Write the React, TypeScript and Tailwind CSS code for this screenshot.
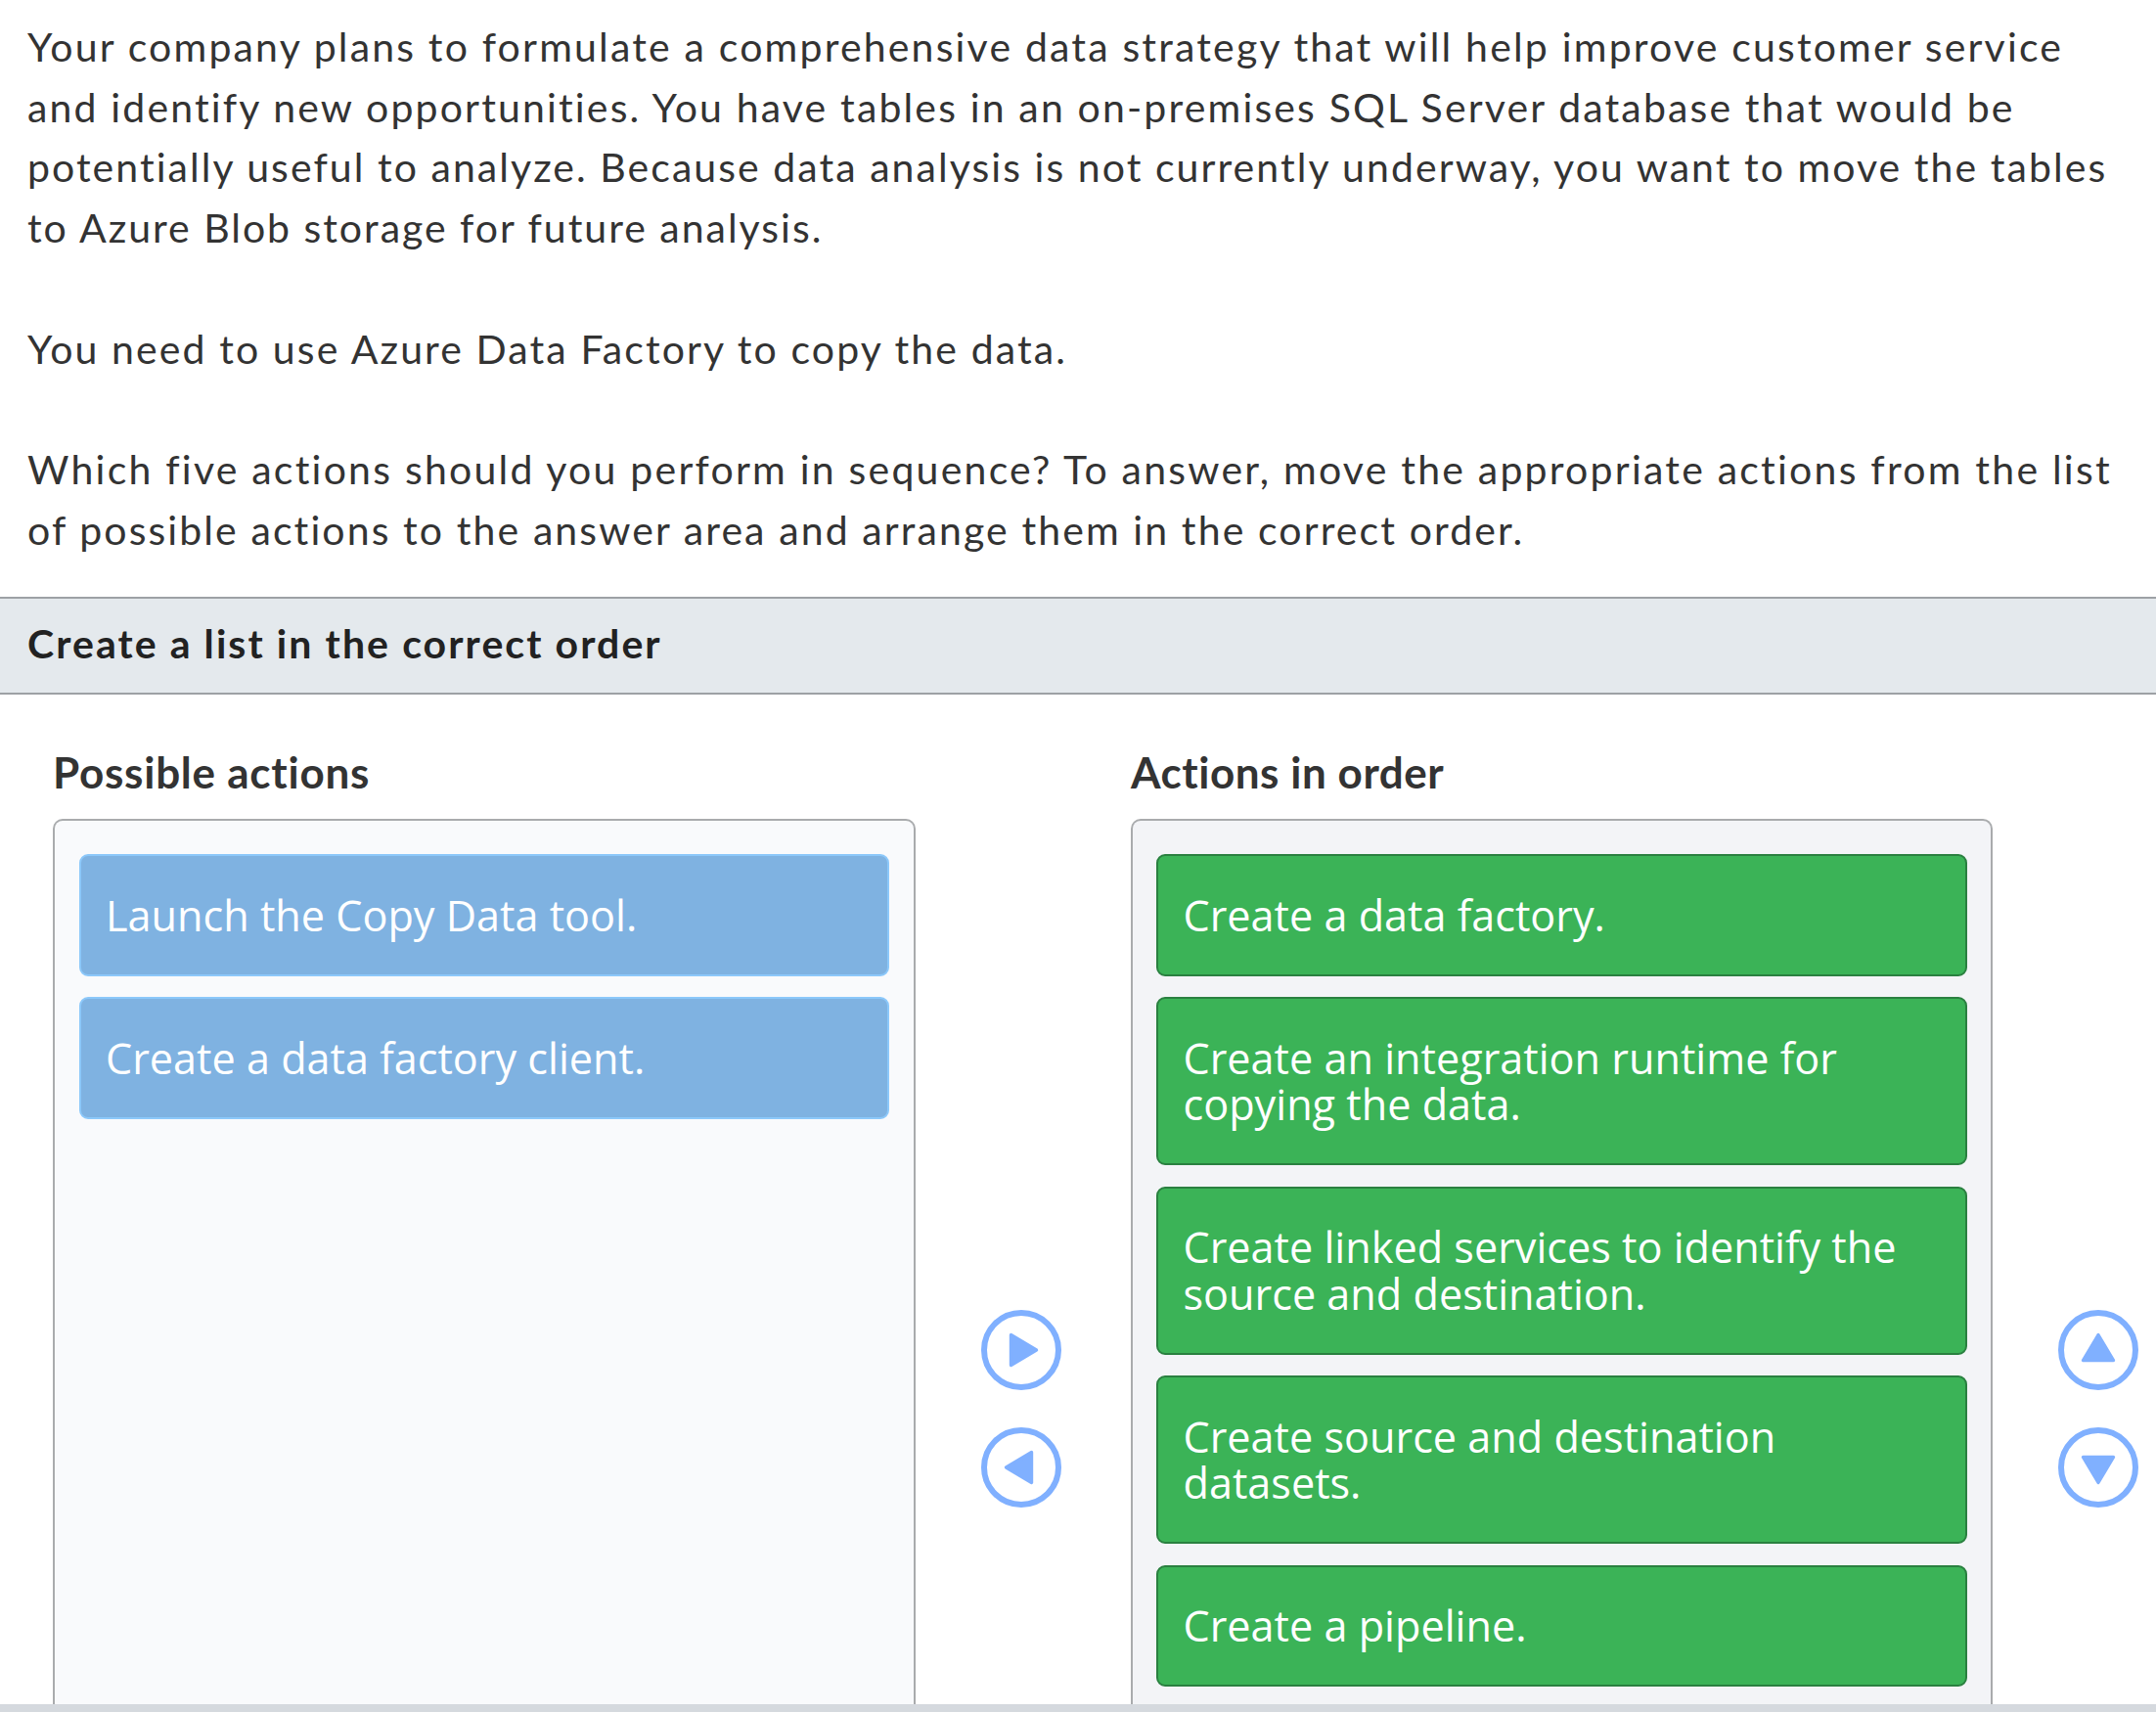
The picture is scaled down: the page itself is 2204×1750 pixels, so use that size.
type Direction = "right" | "left" | "up" | "down";

const rotation: Record<Direction, string> = {
  right: "rotate-0",
  left: "rotate-180",
  up: "-rotate-90",
  down: "rotate-90",
};

function ArrowButton({ direction }: { direction: Direction }) {
  return (
    <button type="button" aria-label={`Move ${direction}`} className="block size-[82px] rounded-full">
      <svg viewBox="0 0 82 82" className={`size-full ${rotation[direction]}`}>
        <circle cx="41" cy="41" r="38" fill="none" stroke="#80b0ff" strokeWidth="6" />
        <path
          d="M30.5 25.5 V56.5 L56.5 41 Z"
          fill="#80b0ff"
          stroke="#80b0ff"
          strokeWidth="3.4"
          strokeLinejoin="round"
        />
      </svg>
    </button>
  );
}

const possible = ["Launch the Copy Data tool.", "Create a data factory client."];

const ordered = [
  ["Create a data factory."],
  ["Create an integration runtime for", "copying the data."],
  ["Create linked services to identify the", "source and destination."],
  ["Create source and destination", "datasets."],
  ["Create a pipeline."],
];

function Line({ className, children }: { className: string; children: string }) {
  return <span className={`block whitespace-nowrap ${className}`}>{children}</span>;
}

export default function App() {
  return (
    <div className="flex h-[1750px] w-[2204px] flex-col overflow-hidden bg-white font-['Lato',sans-serif] text-[#333]">
      <section className="h-[610px] shrink-0 pt-[17px] pl-[28px] text-[41px] leading-[61.7px]">
        <p className="mb-[61.7px]">
          <Line className="tracking-[2.18px]">
            Your company plans to formulate a comprehensive data strategy that will help improve customer service
          </Line>
          <Line className="tracking-[2.15px]">
            and identify new opportunities. You have tables in an on-premises SQL Server database that would be
          </Line>
          <Line className="tracking-[2.05px]">
            potentially useful to analyze. Because data analysis is not currently underway, you want to move the tables
          </Line>
          <Line className="tracking-[1.98px]">to Azure Blob storage for future analysis.</Line>
        </p>
        <p className="mb-[61.7px]">
          <Line className="tracking-[2.1px]">You need to use Azure Data Factory to copy the data.</Line>
        </p>
        <p>
          <Line className="tracking-[2.22px]">
            Which five actions should you perform in sequence? To answer, move the appropriate actions from the list
          </Line>
          <Line className="tracking-[2.1px]">
            of possible actions to the answer area and arrange them in the correct order.
          </Line>
        </p>
      </section>

      <h2 className="h-[100px] shrink-0 border-y-2 border-[#9da1a5] bg-[#e4e9ed] pl-[28px] text-[41px] leading-[92px] font-bold tracking-[2.08px] text-[#222]">
        Create a list in the correct order
      </h2>

      <main className="flex min-h-0 flex-1 overflow-hidden pt-[53px] pl-[54px]">
        <section className="flex w-[882px] flex-col">
          <h3 className="h-[74px] shrink-0 text-[44px] leading-[53px] font-bold tracking-[0.76px]">Possible actions</h3>
          <ul className="flex flex-1 flex-col gap-[21.5px] rounded-t-[10px] border-2 border-b-0 border-[#a9abad] bg-[#f9fafc] px-[25px] pt-[34px] font-['Open_Sans',sans-serif] text-[43.2px] leading-[47.5px] text-white">
            {possible.map((text) => (
              <li
                key={text}
                className="rounded-[9px] border-2 border-[#8cc8fa] bg-[#7fb2e1] py-[36.5px] pl-[25px] whitespace-nowrap"
              >
                {text}
              </li>
            ))}
          </ul>
        </section>

        <div className="ml-[67px] flex w-[82px] flex-col gap-[38px] pt-[576px]">
          <ArrowButton direction="right" />
          <ArrowButton direction="left" />
        </div>

        <section className="ml-[71px] flex w-[881px] flex-col">
          <h3 className="h-[74px] shrink-0 text-[44px] leading-[53px] font-bold tracking-[0.55px]">Actions in order</h3>
          <ul className="flex flex-1 flex-col gap-[21.5px] rounded-t-[10px] border-2 border-b-0 border-[#a9abad] bg-[#f3f4f7] px-[24px] pt-[34px] font-['Open_Sans',sans-serif] text-[43.2px] leading-[47.5px] text-white">
            {ordered.map((lines) => (
              <li key={lines[0]} className="rounded-[9px] border-2 border-[#2a8040] bg-[#3bb357] py-[36.5px] pl-[25.5px]">
                {lines.map((line) => (
                  <Line key={line} className="tracking-normal">
                    {line}
                  </Line>
                ))}
              </li>
            ))}
          </ul>
        </section>

        <div className="ml-[67px] flex w-[82px] flex-col gap-[38px] pt-[576px]">
          <ArrowButton direction="up" />
          <ArrowButton direction="down" />
        </div>
      </main>

      <div className="h-2 shrink-0 bg-[#d5d9de]" />
    </div>
  );
}
